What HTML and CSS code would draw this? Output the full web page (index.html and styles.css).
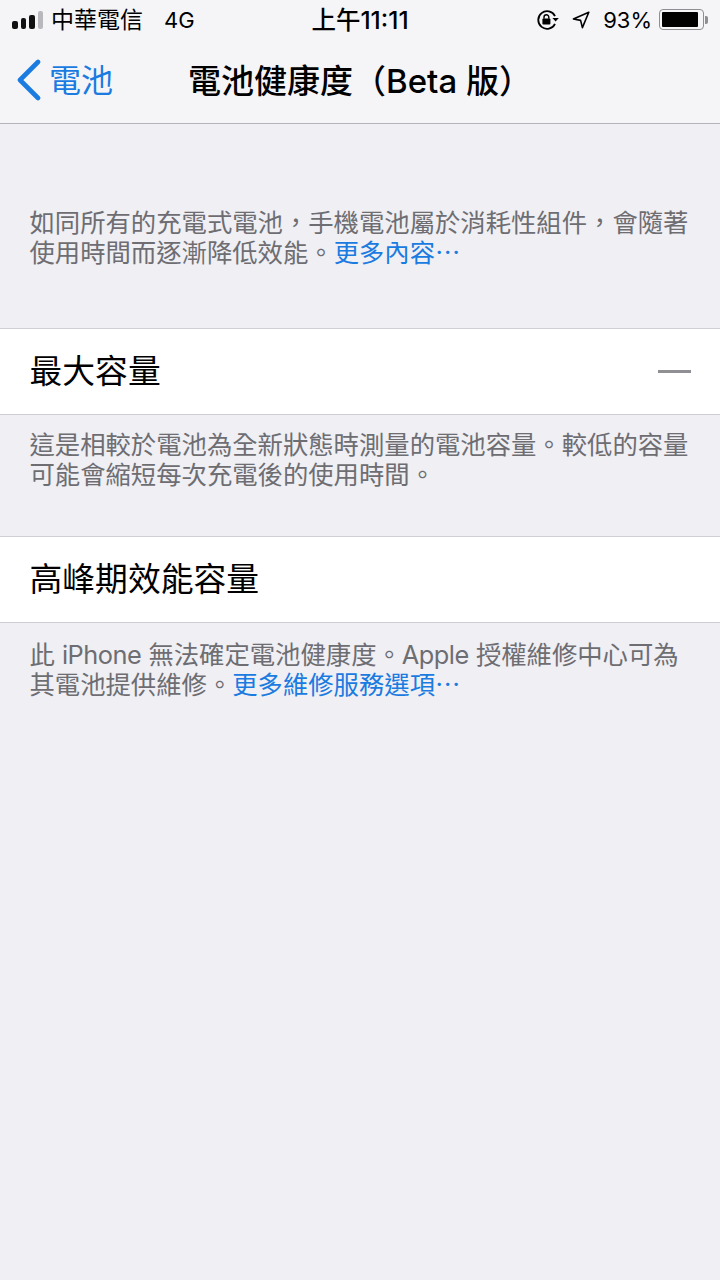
FILE: index.html
```html
<!DOCTYPE html>
<html lang="zh-Hant">

  <head>
    <meta charset="UTF-8">
    <meta name="viewport" content="width=device-width, initial-scale=1.0">
    <title>電池健康度</title>
    <link rel="stylesheet" href="styles.css">
  </head>

  <body>
    <header class="top">
      <div class="status">
        <div class="status-left">
          <div class="signal">
            <span class="bar bar1"></span>
            <span class="bar bar2"></span>
            <span class="bar bar3"></span>
            <span class="bar bar4 off"></span>
          </div>
          <span class="carrier">中華電信</span>
          <span class="net">4G</span>
        </div>
        <div class="clock">上午11:11</div>
        <div class="status-right">
          <svg class="icon-lock" width="23" height="20" viewBox="0 0 23 20">
            <path d="M19 6.2A8.8 8.8 0 1 0 19 13.8" fill="none" stroke="#000" stroke-width="1.8"/>
            <path d="M16.4 8h6.4l-3.2 3.6z" fill="#000"/>
            <rect x="6.4" y="8.6" width="8" height="6" rx="1" fill="#000"/>
            <path d="M8 8.8V7.2a2.4 2.4 0 0 1 4.8 0v1.6" fill="none" stroke="#000" stroke-width="1.4"/>
          </svg>
          <svg class="icon-loc" width="18" height="18" viewBox="0 0 18 18">
            <path d="M16.8 1.2 1.4 8 8.6 9.4 10.4 16.6z" fill="none" stroke="#000" stroke-width="1.6" stroke-linejoin="round"/>
          </svg>
          <span class="percent">93%</span>
          <div class="battery">
            <div class="battery-body"><div class="battery-fill"></div></div>
            <div class="battery-cap"></div>
          </div>
        </div>
      </div>
      <nav class="nav">
        <div class="back">
          <svg width="26" height="42" viewBox="0 0 26 42">
            <path d="M22 3 4 21l18 18" fill="none" stroke="#1a7be0" stroke-width="4.6" stroke-linecap="round" stroke-linejoin="round"/>
          </svg>
          <span class="back-text">電池</span>
        </div>
        <h1 class="title">電池健康度（Beta 版）</h1>
      </nav>
    </header>

    <main>
      <p class="note note-first">如同所有的充電式電池，手機電池屬於消耗性組件，會隨著使用時間而逐漸降低效能。<a class="link">更多內容<span class="dots">⋯</span></a></p>

      <div class="row">
        <span class="label">最大容量</span>
        <span class="dash"></span>
      </div>
      <p class="note note-mid">這是相較於電池為全新狀態時測量的電池容量。較低的容量可能會縮短每次充電後的使用時間。</p>

      <div class="row">
        <span class="label">高峰期效能容量</span>
      </div>
      <p class="note note-last">此 <span class="latin">iPhone</span> 無法確定電池健康度。<span class="latin">Apple</span> 授權維修中心可為其電池提供維修。<a class="link">更多維修服務選項<span class="dots">⋯</span></a></p>
    </main>
  </body>

</html>
```
FILE: styles.css
```css
* {
  box-sizing: border-box;
}

body {
  margin: 0;
  height: 1280px;
  overflow: hidden;
  background-color: #efeff4;
  font-family: Inter, "Noto Sans CJK TC", sans-serif;
  color: #000;
}

.top {
  height: 124px;
  background-color: #f5f5f8;
  border-bottom: 1px solid #b4b4ba;
}

.status {
  height: 39px;
  padding: 0 12px;
  display: flex;
  align-items: center;
  justify-content: space-between;
}

.status-left,
.status-right {
  flex: 1;
  display: flex;
  align-items: center;
}

.status-right {
  justify-content: flex-end;
}

.signal {
  display: flex;
  align-items: flex-end;
  gap: 3px;
  width: 32px;
  height: 18px;
}

.bar {
  width: 5.5px;
  background-color: #111;
  border-radius: 2px;
}

.bar1 { height: 8px; }
.bar2 { height: 11px; }
.bar3 { height: 14px; }
.bar4 { height: 18px; }

.off {
  background-color: #b9b9bd;
}

.carrier {
  margin-left: 7px;
  padding-bottom: 3px;
  font-size: 23px;
}

.net {
  margin-left: 21px;
  font-size: 22px;
}

.clock {
  padding-bottom: 3px;
  font-size: 24.5px;
  font-weight: 500;
}

.icon-lock {
  margin-right: 13px;
}

.icon-loc {
  margin-right: 13px;
}

.percent {
  font-size: 22px;
  margin-right: 7px;
}

.battery {
  display: flex;
  align-items: center;
}

.battery-body {
  width: 45px;
  height: 21px;
  padding: 2px;
  border: 1.5px solid #8e8e93;
  border-radius: 4px;
}

.battery-fill {
  width: 93%;
  height: 100%;
  background-color: #000;
  border-radius: 1px;
}

.battery-cap {
  width: 3px;
  height: 8px;
  margin-left: 1px;
  background-color: #8e8e93;
  border-radius: 0 2px 2px 0;
}

.nav {
  position: relative;
  height: 84px;
  display: flex;
  align-items: center;
  justify-content: center;
}

.back {
  position: absolute;
  left: 16px;
  top: 1px;
  height: 80px;
  display: flex;
  align-items: center;
  gap: 7px;
  color: #1a7be0;
}

.back-text {
  padding-bottom: 4px;
  font-size: 32px;
}

.title {
  margin: 0;
  padding-bottom: 5px;
  font-size: 33px;
  font-weight: 500;
}

.note {
  margin: 0;
  padding: 0 29.5px;
  font-size: 25.35px;
  line-height: 30px;
  color: #6d6d72;
}

.note-first {
  padding-top: 84px;
  height: 204px;
}

.note-mid {
  padding-top: 15px;
  height: 121px;
}

.note-last {
  padding-top: 17px;
}

.latin {
  letter-spacing: -0.5px;
}

.link {
  color: #1a7be0;
}

.dots {
  font-family: "Noto Sans CJK TC", sans-serif;
  line-height: 1;
}

.row {
  height: 87px;
  padding: 0 29px 0 29.5px;
  display: flex;
  align-items: center;
  justify-content: space-between;
  background-color: #fff;
  border-top: 1px solid #cfcfd3;
  border-bottom: 1px solid #cfcfd3;
}

.label {
  padding-bottom: 6px;
  font-size: 32.8px;
}

.dash {
  width: 33px;
  height: 3px;
  background-color: #909094;
}
```
